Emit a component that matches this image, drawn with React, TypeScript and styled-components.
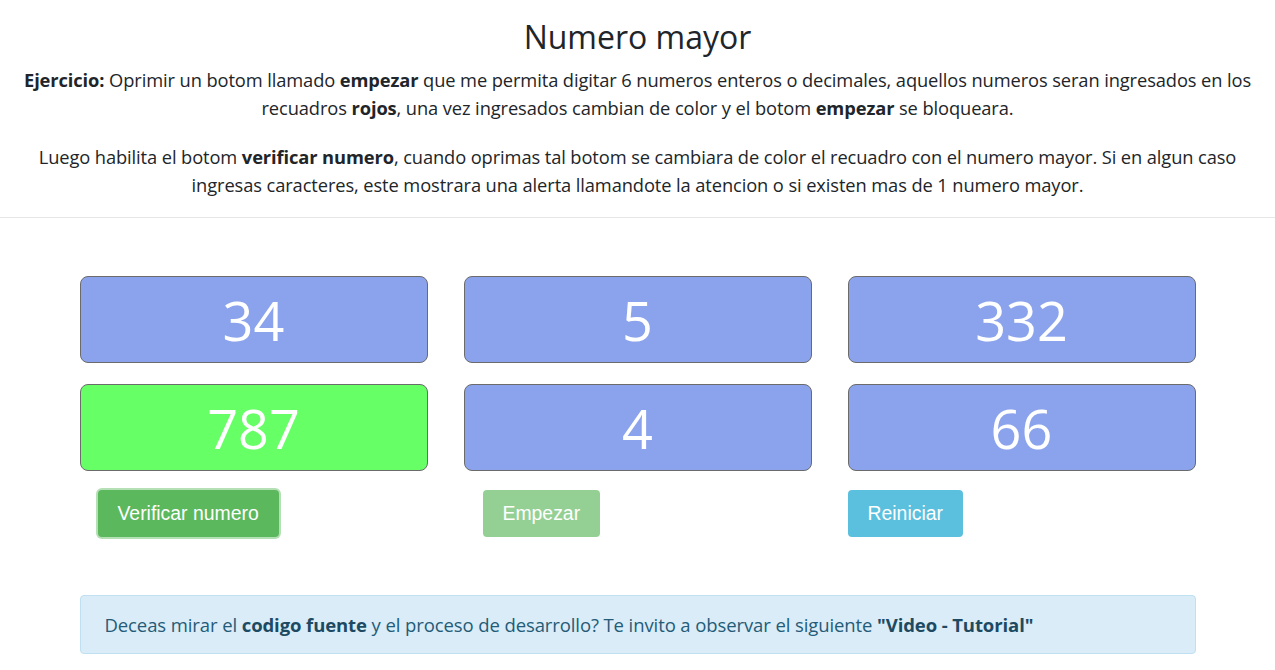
import { FC } from 'react';
import styled, { createGlobalStyle } from 'styled-components';

const GlobalStyle = createGlobalStyle`
  html, body {
    margin: 0;
    padding: 0;
    background: #fff;
  }
  body {
    font-family: "Open Sans", "Noto Sans", sans-serif;
    color: #212529;
  }
`;

interface INumberBox {
  value: string;
  highlight?: boolean;
}

const numbers: INumberBox[] = [
  { value: '34' },
  { value: '5' },
  { value: '332' },
  { value: '787', highlight: true },
  { value: '4' },
  { value: '66' },
];

const App: FC = () => {
  return (
    <>
      <GlobalStyle />
      <S.header>
        <S.title>Numero mayor</S.title>
        <S.text>
          <b>Ejercicio:</b> Oprimir un botom llamado <b>empezar</b> que me permita digitar 6 numeros
          enteros o decimales, aquellos numeros seran ingresados en los recuadros <b>rojos</b>, una vez
          ingresados cambian de color y el botom <b>empezar</b> se bloqueara.
        </S.text>
        <S.text $last>
          Luego habilita el botom <b>verificar numero</b>, cuando oprimas tal botom se cambiara de color
          el recuadro con el numero mayor. Si en algun caso ingresas caracteres, este mostrara una alerta
          llamandote la atencion o si existen mas de 1 numero mayor.
        </S.text>
      </S.header>
      <S.divider />
      <S.main>
        <S.grid>
          {numbers.map((n, i) => (
            <S.box key={i} $highlight={n.highlight}>
              {n.value}
            </S.box>
          ))}
        </S.grid>
        <S.actions>
          <S.cell>
            <S.button $variant="success" $focused $offset={18}>
              Verificar numero
            </S.button>
          </S.cell>
          <S.cell>
            <S.button $variant="success" $disabled $offset={19}>
              Empezar
            </S.button>
          </S.cell>
          <S.cell>
            <S.button $variant="info" $offset={0}>
              Reiniciar
            </S.button>
          </S.cell>
        </S.actions>
        <S.alert>
          Deceas mirar el <b>codigo fuente</b> y el proceso de desarrollo? Te invito a observar el
          siguiente <b>"Video - Tutorial"</b>
        </S.alert>
      </S.main>
    </>
  );
};

const S = {
  header: styled.header`
    max-width: 1250px;
    margin: 0 auto;
    padding-top: 17px;
    text-align: center;
  `,

  title: styled.h1`
    margin: 0 0 9px;
    font-size: 32px;
    line-height: 40px;
    font-weight: 500;
    color: #212529;
  `,

  text: styled.p<{ $last?: boolean }>`
    margin: 0 0 ${({ $last }) => ($last ? 18 : 21)}px;
    font-size: 18.3px;
    line-height: 28px;
    letter-spacing: -0.1px;
    color: #212529;
    b {
      font-weight: 700;
    }
  `,

  divider: styled.hr`
    margin: 0;
    border: 0;
    border-top: 1px solid #e6e6e6;
  `,

  main: styled.main`
    width: 1116px;
    margin: 0 auto;
    padding-top: 58px;
  `,

  grid: styled.div`
    display: grid;
    grid-template-columns: repeat(3, 1fr);
    column-gap: 36px;
    row-gap: 21px;
  `,

  box: styled.div<{ $highlight?: boolean }>`
    height: 85px;
    display: flex;
    align-items: center;
    justify-content: center;
    border: 1px solid #6b6b6b;
    border-radius: 8px;
    background: ${({ $highlight }) => ($highlight ? '#66ff66' : '#8aa3ec')};
    color: #fff;
    font-size: 54px;
    line-height: 1;
  `,

  actions: styled.div`
    display: grid;
    grid-template-columns: repeat(3, 1fr);
    column-gap: 36px;
    margin-top: 19px;
  `,

  cell: styled.div`
    display: flex;
  `,

  button: styled.button<{
    $variant: 'success' | 'info';
    $disabled?: boolean;
    $focused?: boolean;
    $offset: number;
  }>`
    margin-left: ${({ $offset }) => $offset}px;
    height: 47px;
    padding: 0 19px;
    border: 1px solid transparent;
    border-radius: 4px;
    font-family: "Liberation Sans", Arial, sans-serif;
    font-size: 19.4px;
    color: #fff;
    cursor: pointer;
    background: ${({ $variant }) => ($variant === 'success' ? '#5cb85c' : '#5bc0de')};
    opacity: ${({ $disabled }) => ($disabled ? 0.65 : 1)};
    box-shadow: ${({ $focused }) => ($focused ? '0 0 0 2px rgba(92, 184, 92, 0.45)' : 'none')};
  `,

  alert: styled.div`
    margin-top: 58px;
    padding: 17px 24px;
    border: 1px solid #bee0f0;
    border-radius: 4px;
    background: #d9ecf7;
    color: #245b78;
    font-size: 18.5px;
    line-height: 23px;
    letter-spacing: -0.1px;
    b {
      font-weight: 700;
      color: #1d4a62;
    }
  `,
};

export default App;
